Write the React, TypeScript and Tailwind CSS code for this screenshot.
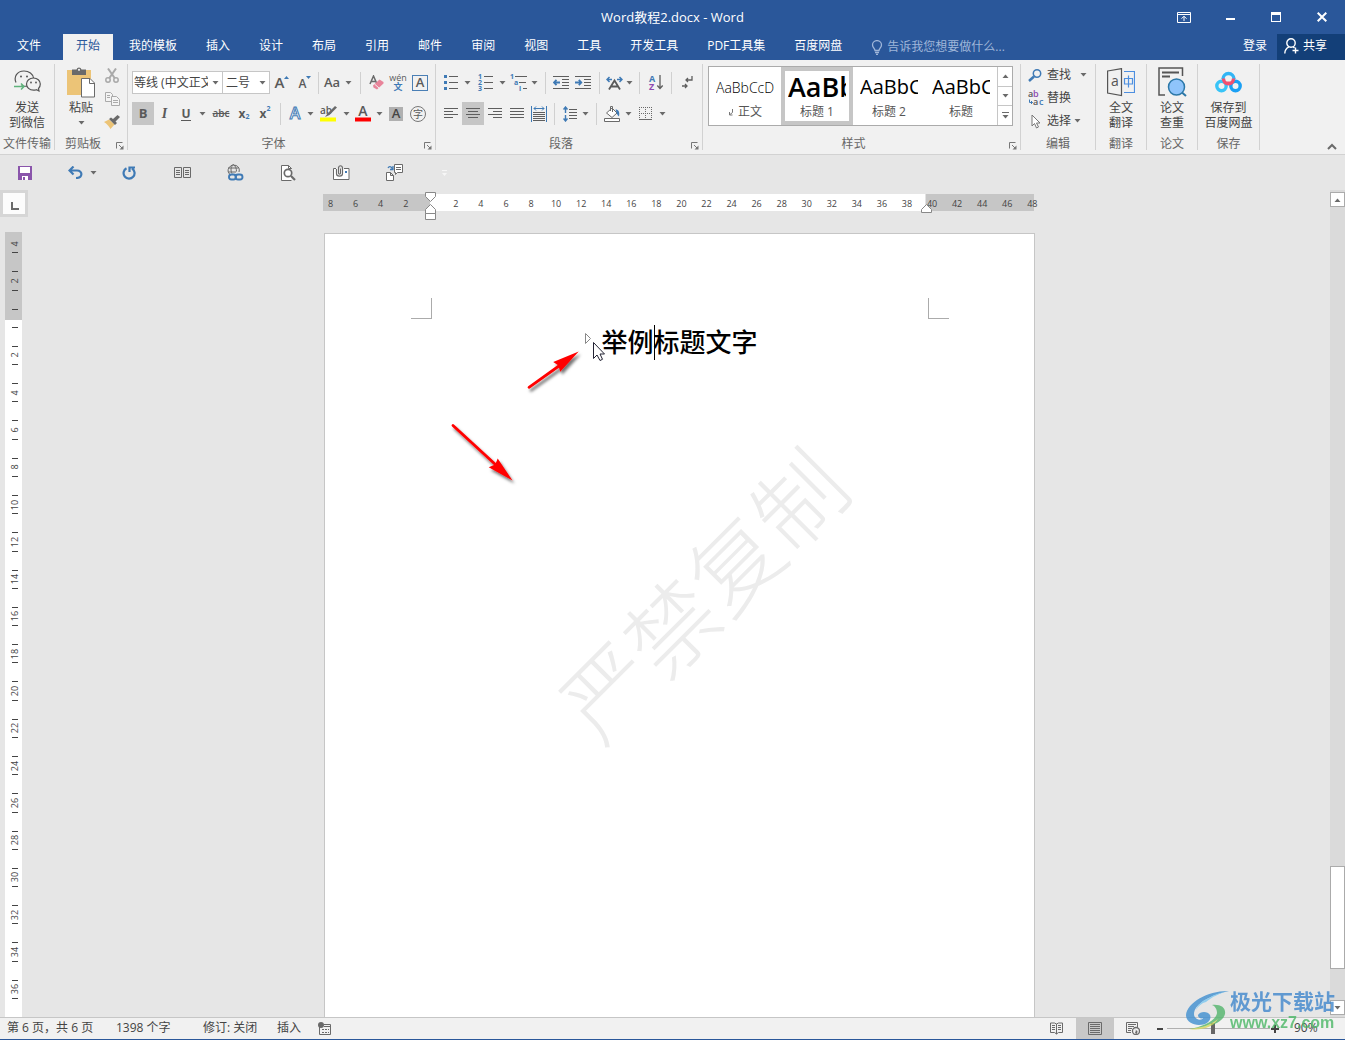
import React, { useState } from 'react';
import clsx from 'clsx';

const TABS = [
	'开始',
	'我的模板',
	'插入',
	'设计',
	'布局',
	'引用',
	'邮件',
	'审阅',
	'视图',
	'工具',
	'开发工具',
	'PDF工具集',
	'百度网盘',
];

const STYLES = [
	{ name: '正文', preview: 'AaBbCcDd', className: 'text-[14px] font-light', mark: true },
	{ name: '标题 1', preview: 'AaBb', className: 'text-[27px] font-semibold' },
	{ name: '标题 2', preview: 'AaBbCc', className: 'text-[20px]' },
	{ name: '标题', preview: 'AaBbCc', className: 'text-[20px]' },
];

const H_RULER = [8, 6, 4, 2, 0, ...Array.from({ length: 24 }, (_, i) => (i + 1) * 2)];
const V_RULER = [4, 2, 0, ...Array.from({ length: 18 }, (_, i) => (i + 1) * 2)];

const GRAY = '#6a6a6a';
const BLUE = '#3f7ab5';

interface ToolProps {
	label: string;
	className?: string;
	active?: boolean;
	children?: React.ReactNode;
}

function Tool({ label, className, active, children }: ToolProps) {
	return (
		<button
			type="button"
			aria-label={label}
			className={clsx(
				'flex h-[23px] shrink-0 items-center justify-center text-[#5a5a5a]',
				active && 'bg-[#c6c6c6]',
				className
			)}
		>
			{children}
		</button>
	);
}

function Caret() {
	return (
		<svg width="7" height="4" viewBox="0 0 7 4" className="shrink-0">
			<path d="M0.5 0h6L3.5 3.6z" fill={GRAY} />
		</svg>
	);
}

function DropArrow({ label }: { label: string }) {
	return (
		<Tool label={label} className="w-[11px]">
			<Caret />
		</Tool>
	);
}

function Sep({ className }: { className: string }) {
	return (
		<span className={clsx('flex h-[22px] shrink-0 justify-center', className)}>
			<span className="w-px bg-[#d0d0d0]" />
		</span>
	);
}

interface GroupProps {
	title: string;
	className: string;
	launcher?: boolean;
	children: React.ReactNode;
}

function Group({ title, className, launcher, children }: GroupProps) {
	return (
		<section
			aria-label={title}
			className={clsx('flex shrink-0 flex-col border-r border-[#d2d2d2]', className)}
		>
			<div className="flex-1">{children}</div>
			<div
				className={clsx(
					'relative h-[13px] text-center leading-[14px] whitespace-nowrap text-[#666]',
					launcher && 'pr-4'
				)}
			>
				{title}
				{launcher && (
					<button type="button" aria-label={`${title}设置`} className="absolute right-[3px] bottom-0">
						<svg width="8" height="8" viewBox="0 0 8 8" fill="none" stroke="#777">
							<path d="M0.5 6.5v-6h6M3 3l3 3" />
							<path d="M7.5 3.5v4h-4z" fill="#777" stroke="none" />
						</svg>
					</button>
				)}
			</div>
		</section>
	);
}

function BigButton({ lines, children }: { lines: string[]; children: React.ReactNode }) {
	return (
		<button type="button" className="flex w-full flex-col items-center pt-[3px] text-[#444]">
			<span className="mb-[3px] flex h-[30px] items-center">{children}</span>
			{lines.map((line) => (
				<span key={line} className="leading-[15px] whitespace-nowrap">
					{line}
				</span>
			))}
		</button>
	);
}

// Rows of horizontal strokes used by the alignment buttons
function Lines({ rows }: { rows: [number, number][] }) {
	return (
		<svg width="14" height="11" viewBox="0 0 14 11" stroke="#5e5e5e">
			{rows.map(([from, to], i) => (
				<path key={i} d={`M${from} ${i * 3 + 0.5}H${to}`} />
			))}
		</svg>
	);
}

function TitleBar() {
	return (
		<header className="grid h-[34px] grid-cols-[1fr_auto_1fr] items-center">
			<span />
			<h1 className="text-[13px] leading-[18px]">Word教程2.docx - Word</h1>
			<div className="flex justify-end">
				<button type="button" aria-label="功能区显示选项" className="flex w-[46px] justify-center">
					<svg width="14" height="11" viewBox="0 0 14 11" fill="none" stroke="#fff">
						<path d="M0.5 0.5h13v10h-13zM0.5 2.5h13M7 9V4.5M4.5 6.7L7 4.2l2.5 2.5" />
					</svg>
				</button>
				<button type="button" aria-label="最小化" className="flex w-[46px] items-center justify-center">
					<span className="mt-1 h-[2px] w-[9px] bg-white" />
				</button>
				<button type="button" aria-label="最大化" className="flex w-[46px] justify-center">
					<span className="h-[10px] w-[10px] border border-t-3 border-white" />
				</button>
				<button type="button" aria-label="关闭" className="flex w-[46px] items-center justify-center">
					<svg width="10" height="10" viewBox="0 0 10 10" stroke="#fff" strokeWidth="2">
						<path d="M0.7 0.7l8.6 8.6M9.3 0.7L0.7 9.3" />
					</svg>
				</button>
			</div>
		</header>
	);
}

function TabBar() {
	const [active, setActive] = useState('开始');

	return (
		<nav className="flex h-[26px] items-stretch gap-[3px] whitespace-nowrap">
			<button type="button" className="mr-[6px] ml-1 px-[13px] pb-[3px]">
				文件
			</button>
			{TABS.map((tab) => (
				<button
					key={tab}
					type="button"
					onClick={() => setActive(tab)}
					className={clsx('px-[13px] pb-[3px]', tab === active && 'bg-[#f1f1f1] text-[#2a579a]')}
				>
					{tab}
				</button>
			))}
			<label className="ml-[13px] flex flex-1 items-center gap-1">
				<svg width="12" height="15" viewBox="0 0 12 15" fill="none" stroke="#9fb6d9" strokeWidth="1.3">
					<path d="M4 10.5C4 8.5 1.5 7.500 1.500 4.900a4.500 4.300 0 0 1 9 0C10.500 7.500 8 8.500 8 10.500zM4 12.500h4M5 14.300h2" />
				</svg>
				<input
					aria-label="告诉我您想要做什么"
					placeholder="告诉我您想要做什么..."
					className="w-[160px] bg-transparent outline-none placeholder:text-[#9fb6d9]"
				/>
			</label>
			<button type="button" className="px-[7px] pb-[3px]">
				登录
			</button>
			<button type="button" className="flex w-[68px] items-center gap-1 bg-[#133f78] pb-[3px] pl-[7px]">
				<svg width="15" height="16" viewBox="0 0 15 16" fill="none" stroke="#fff" strokeWidth="1.4">
					<circle cx="7" cy="5" r="4.200" />
					<path d="M0.800 15.500c0-3 2-5.700 4.200-6.700M9 8.800l1.500 1M11.500 9.500v6M8.500 12.500h6" />
				</svg>
				共享
			</button>
		</nav>
	);
}

function ClipboardGroup() {
	return (
		<Group title="剪贴板" className="w-[73px]" launcher>
			<div className="flex">
				<button type="button" className="flex w-12 flex-col items-center pt-[3px] pl-1 text-[#444]">
					<svg width="28" height="31" viewBox="0 0 28 31" className="mb-[2px]">
						<path d="M0 3h24v25H0z" fill="#ecc477" />
						<path d="M5 2.500h4.500a2.600 2.600 0 0 1 5 0H19V8H5z" fill="#6a6a6a" />
						<circle cx="12" cy="2.800" r="1.100" fill="#f1f1f1" />
						<path d="M14.500 11.500h8.500l4.500 4.500v14h-13z" fill="#fff" stroke="#6a6a6a" />
						<path d="M22.500 11.500v5h5" fill="none" stroke="#6a6a6a" />
					</svg>
					<span className="mb-[6px] leading-[15px]">粘贴</span>
					<Caret />
				</button>
				<div className="flex flex-col">
					<Tool label="剪切" className="w-[18px]">
						<svg width="14" height="15" viewBox="0 0 14 15" fill="none" stroke="#a9a9a9" strokeWidth="1.500">
							<circle cx="3" cy="12" r="2.200" />
							<circle cx="11" cy="12" r="2.200" />
							<path d="M3 0.500l6.800 9.800M11 0.500L4.200 10.300" strokeWidth="2" />
						</svg>
					</Tool>
					<Tool label="复制" className="w-[18px]">
						<svg width="15" height="14" viewBox="0 0 15 14" fill="#f4f4f4" stroke="#aaa">
							<path d="M0.500 0.500h5l2 2v7h-7z" />
							<path d="M6.500 4.500h5l3 3v6h-8zM8 8.500h5M8 10.500h5M2 3.500h3M2 5.500h3" />
						</svg>
					</Tool>
					<Tool label="格式刷" className="w-[18px]">
						<svg width="16" height="14" viewBox="0 0 16 14">
							<path d="M0 7l5-2.500 5.500 5L6.500 14C5 11 3 9 0 7z" fill="#ecc477" />
							<path d="M5 4l2-1.500L9 4l4.500-4L16 2 11.500 6.500 13 8l-2 2z" fill="#6a6a6a" />
						</svg>
					</Tool>
				</div>
			</div>
		</Group>
	);
}

function FontGroup() {
	return (
		<Group title="字体" className="w-[308px]" launcher>
			<div className="flex flex-col gap-2 pt-[7px] pl-1">
				<div className="flex items-center">
					<div className="relative w-[91px]">
						<select
							aria-label="字体"
							className="h-[23px] w-full appearance-none overflow-hidden border border-[#c6c6c6] bg-white pr-[14px] pl-px text-[#444] outline-none"
						>
							<option>等线 (中文正文)</option>
						</select>
						<span className="pointer-events-none absolute top-[10px] right-1">
							<Caret />
						</span>
					</div>
					<div className="relative -ml-px w-12">
						<select
							aria-label="字号"
							className="h-[23px] w-full appearance-none border border-[#c6c6c6] bg-white pl-[3px] text-[#444] outline-none"
						>
							<option>二号</option>
						</select>
						<span className="pointer-events-none absolute top-[10px] right-1">
							<Caret />
						</span>
					</div>
					<Tool label="增大字号" className="w-6">
						<span className="text-[15px] font-semibold">A</span>
						<svg width="5" height="3" viewBox="0 0 5 3" className="mb-[11px]">
							<path d="M0 3h5L2.500 0z" fill={BLUE} />
						</svg>
					</Tool>
					<Tool label="减小字号" className="w-[22px]">
						<span className="mt-[2px] text-[12px] font-semibold">A</span>
						<svg width="5" height="3" viewBox="0 0 5 3" className="mb-[11px]">
							<path d="M0 0h5L2.500 3z" fill={BLUE} />
						</svg>
					</Tool>
					<Sep className="w-[5px]" />
					<Tool label="更改大小写" className="w-[22px]">
						<span className="text-[13px] font-semibold">Aa</span>
					</Tool>
					<DropArrow label="更改大小写选项" />
					<Sep className="w-[13px]" />
					<Tool label="清除所有格式" className="w-5">
						<svg width="16" height="16" viewBox="0 0 16 16">
							<path d="M1 9L4.500 1 8 9M2.300 6.500h4.400" fill="none" stroke={GRAY} strokeWidth="1.500" />
							<path d="M4 10.500L10.500 4.500l4 2.500v1.500L8 14.500 4.500 12.500z" fill="#e8849a" />
							<path d="M5.500 9l4.500 4" stroke="#f1f1f1" />
						</svg>
					</Tool>
					<Tool label="拼音指南" className="w-[22px] flex-col">
						<span className="text-[9px] leading-[8px]">wén</span>
						<span className="text-[9px] leading-[10px] font-bold text-[#3f7ab5]">文</span>
					</Tool>
					<Tool label="字符边框" className="w-[22px]">
						<span className="flex size-4 items-center justify-center border border-[#4a7fb5] text-[13px] leading-none font-semibold">
							A
						</span>
					</Tool>
				</div>
				<div className="flex items-center">
					<Tool label="加粗" className="w-[22px]" active>
						<span className="text-[13px] font-bold">B</span>
					</Tool>
					<Tool label="倾斜" className="w-[21px]">
						<span className="font-['Liberation_Serif'] text-[14px] font-bold italic">I</span>
					</Tool>
					<Tool label="下划线" className="w-[22px]">
						<span className="border-b border-[#5a5a5a] text-[12px] leading-[13px] font-bold">U</span>
					</Tool>
					<DropArrow label="下划线选项" />
					<Tool label="删除线" className="w-[26px]">
						<span className="text-[10px] font-semibold line-through">abc</span>
					</Tool>
					<Tool label="下标" className="w-5">
						<span className="text-[12px] font-bold">x</span>
						<span className="mt-2 text-[7px] font-bold text-[#3f7ab5]">2</span>
					</Tool>
					<Tool label="上标" className="w-[22px]">
						<span className="text-[12px] font-bold">x</span>
						<span className="mb-2 text-[7px] font-bold text-[#3f7ab5]">2</span>
					</Tool>
					<Sep className="w-[9px]" />
					<Tool label="文本效果" className="w-5">
						<svg width="16" height="17" viewBox="0 0 16 17" className="overflow-visible">
							<text
								x="8"
								y="14"
								textAnchor="middle"
								fontSize="16"
								fontWeight="600"
								fill="#fff"
								stroke={BLUE}
								strokeWidth="1"
							>
								A
							</text>
						</svg>
					</Tool>
					<DropArrow label="文本效果选项" />
					<Tool label="突出显示" className="w-[25px]">
						<svg width="17" height="17" viewBox="0 0 17 17" className="overflow-visible">
							<text x="0" y="9" fontSize="10" fontWeight="600" fill="#5a5a5a">
								ab
							</text>
							<path d="M5 12l2.500-3.500L15 1l2 1.500-7.500 7.500z" fill={GRAY} />
							<path d="M0 12.500h16v4H0z" fill="#ff0" />
						</svg>
					</Tool>
					<DropArrow label="突出显示颜色" />
					<Tool label="字体颜色" className="w-[22px]">
						<svg width="16" height="17" viewBox="0 0 16 17" className="overflow-visible">
							<text x="8" y="11" textAnchor="middle" fontSize="14" fontWeight="600" fill="#5a5a5a">
								A
							</text>
							<path d="M0 12.500h16v4H0z" fill="#f00" />
						</svg>
					</Tool>
					<DropArrow label="字体颜色选项" />
					<Tool label="字符底纹" className="w-[22px]">
						<span className="flex size-[14px] items-center justify-center bg-[#b0b0b0] text-[13px] leading-none font-semibold text-[#444]">
							A
						</span>
					</Tool>
					<Tool label="带圈字符" className="w-[22px]">
						<span className="flex size-4 items-center justify-center rounded-full border border-[#777] text-[10px] leading-none">
							字
						</span>
					</Tool>
				</div>
			</div>
		</Group>
	);
}

function ParagraphGroup() {
	return (
		<Group title="段落" className="w-[267px]" launcher>
			<div className="flex flex-col gap-2 pt-[7px] pl-1">
				<div className="flex items-center">
					<Tool label="项目符号" className="w-[22px]">
						<svg width="14" height="15" viewBox="0 0 14 15" stroke="#5e5e5e">
							<path d="M5 1.500h9M5 7.500h9M5 13.500h9" />
							<path d="M0 0h3v3H0zM0 6h3v3H0zM0 12h3v3H0z" fill={BLUE} stroke="none" />
						</svg>
					</Tool>
					<DropArrow label="项目符号库" />
					<Tool label="编号" className="w-6">
						<svg width="15" height="17" viewBox="0 0 15 17" stroke="#5e5e5e" className="overflow-visible">
							<path d="M6 2.500h9M6 8.500h9M6 14.500h9" />
							<g fill={BLUE} stroke="none" fontSize="7" fontWeight="700">
								<text x="0" y="5">1</text>
								<text x="0" y="11">2</text>
								<text x="0" y="17">3</text>
							</g>
						</svg>
					</Tool>
					<DropArrow label="编号库" />
					<Tool label="多级列表" className="w-[21px]">
						<svg width="17" height="17" viewBox="0 0 17 17" stroke="#5e5e5e" className="overflow-visible">
							<path d="M5 2.500h12M9 8.500h7M13 14.500h4" />
							<g fill={BLUE} stroke="none" fontSize="7" fontWeight="700">
								<text x="0" y="5">1</text>
								<text x="4" y="11">a</text>
								<text x="9" y="17">i</text>
							</g>
						</svg>
					</Tool>
					<DropArrow label="列表库" />
					<Sep className="w-[10px]" />
					<Tool label="减少缩进量" className="w-[22px]">
						<svg width="16" height="13" viewBox="0 0 16 13" stroke="#5e5e5e">
							<path d="M0 0.500h16M9 3.500h7M9 6.500h7M9 9.500h7M0 12.500h16" />
							<path d="M7 6.500H1M3.500 3.800L1 6.500l2.500 2.700" stroke={BLUE} strokeWidth="1.800" fill="none" />
						</svg>
					</Tool>
					<Tool label="增加缩进量" className="w-[22px]">
						<svg width="16" height="13" viewBox="0 0 16 13" stroke="#5e5e5e">
							<path d="M0 0.500h16M9 3.500h7M9 6.500h7M9 9.500h7M0 12.500h16" />
							<path d="M0 6.500h6M3.800 3.800l2.500 2.700-2.500 2.700" stroke={BLUE} strokeWidth="1.800" fill="none" />
						</svg>
					</Tool>
					<Sep className="w-[10px]" />
					<Tool label="中文版式" className="w-5">
						<svg width="17" height="14" viewBox="0 0 17 14" fill="none">
							<path d="M3 13.500L8.500 4.500 14 13.500M5 10.500h7" stroke="#5a5a5a" strokeWidth="1.800" />
							<path
								d="M1 3.500h5M3.500 1L1 3.500 3.500 6M16 3.500h-5M13.500 1L16 3.500 13.500 6"
								stroke={BLUE}
								strokeWidth="1.500"
							/>
						</svg>
					</Tool>
					<DropArrow label="中文版式选项" />
					<Sep className="w-[9px]" />
					<Tool label="排序" className="w-6">
						<svg width="14" height="17" viewBox="0 0 14 17" fontSize="9" fontWeight="700" className="overflow-visible">
							<text x="0" y="8" fill={BLUE}>A</text>
							<text x="0" y="16" fill="#8e4bb0">Z</text>
							<path d="M11 1v13.500M8.300 11.500L11 14.500l2.700-3" stroke="#5e5e5e" strokeWidth="1.300" fill="none" />
						</svg>
					</Tool>
					<Sep className="w-[7px]" />
					<Tool label="显示编辑标记" className="w-6">
						<svg width="11" height="13" viewBox="0 0 11 13" fill="none" stroke="#5e5e5e" strokeWidth="1.300">
							<path d="M10 0v4H4M6 2L4 4l2 2M0 10h5M3 8l2 2-2 2" />
						</svg>
					</Tool>
				</div>
				<div className="flex items-center">
					<Tool label="左对齐" className="w-[22px]">
						<Lines rows={[[0, 14], [0, 9], [0, 14], [0, 9]]} />
					</Tool>
					<Tool label="居中" className="w-[22px]" active>
						<Lines rows={[[0, 14], [2, 12], [0, 14], [2, 12]]} />
					</Tool>
					<Tool label="右对齐" className="w-[22px]">
						<Lines rows={[[0, 14], [5, 14], [0, 14], [5, 14]]} />
					</Tool>
					<Tool label="两端对齐" className="w-[22px]">
						<Lines rows={[[0, 14], [0, 14], [0, 14], [0, 14]]} />
					</Tool>
					<Tool label="分散对齐" className="w-[22px]">
						<svg width="16" height="16" viewBox="0 0 16 16" stroke="#5e5e5e" fill="none">
							<path d="M2 6.500h12M2 8.500h12M2 10.500h12M2 12.500h12M2 14.500h12" />
							<path d="M0.500 0v16M15.500 0v16M3 2.500h10M5 0.500l-2 2 2 2M11 0.500l2 2-2 2" stroke={BLUE} />
						</svg>
					</Tool>
					<Sep className="w-[9px]" />
					<Tool label="行和段落间距" className="w-[21px]">
						<svg width="14" height="16" viewBox="0 0 14 16" fill="none" stroke="#5e5e5e">
							<path d="M6 3.500h8M6 6.500h8M6 9.500h8M6 12.500h8" />
							<path d="M2.500 7V1M0.500 3.500l2-2.500 2 2.500M2.500 9v6M0.500 12.500l2 2.500 2-2.500" stroke={BLUE} strokeWidth="1.400" />
						</svg>
					</Tool>
					<DropArrow label="间距选项" />
					<Sep className="w-[10px]" />
					<Tool label="底纹" className="w-[22px]">
						<svg width="17" height="16" viewBox="0 0 17 16" fill="none" stroke={GRAY}>
							<path d="M2.500 7L8 2l5 5-5 4.500zM6.500 5V0.500h2V6" fill="#fff" />
							<path d="M11.500 3.500c3 0 4.500 2.500 3.500 7-1-1-2-2-2.500-4z" fill={BLUE} stroke="none" />
							<path d="M0.500 12.500h15v3h-15z" fill="#fff" />
						</svg>
					</Tool>
					<DropArrow label="底纹颜色" />
					<Tool label="边框" className="w-[23px]">
						<svg width="13" height="13" viewBox="0 0 13 13" fill="none" stroke={GRAY}>
							<path d="M0.500 0v12M6.500 0v12M12.500 0v12M0 0.500h13M0 6.500h13" strokeDasharray="1 1" />
							<path d="M0 12.500h13" />
						</svg>
					</Tool>
					<DropArrow label="边框选项" />
				</div>
			</div>
		</Group>
	);
}

function StylesGroup() {
	const [selected, setSelected] = useState('标题 1');

	return (
		<Group title="样式" className="w-[318px]" launcher>
			<div className="mt-[2px] mr-[7px] ml-[5px] flex h-[60px] border border-[#ababab] bg-white">
				{STYLES.map((style) => (
					<button
						key={style.name}
						type="button"
						onClick={() => setSelected(style.name)}
						className={clsx(
							'flex w-[72px] flex-col items-center border-4',
							style.name === selected ? 'border-[#c6c6c6]' : 'border-transparent'
						)}
					>
						<span
							className={clsx(
								'flex h-8 w-[58px] items-center overflow-hidden whitespace-nowrap text-black',
								style.className
							)}
						>
							{style.preview}
						</span>
						<span className="flex items-center gap-1 leading-[18px] text-[#555]">
							{style.mark && (
								<svg width="6" height="7" viewBox="0 0 6 7" fill="none" stroke="#777">
									<path d="M4.500 0v3.500L2 5.500M1.500 3v3h3" />
								</svg>
							)}
							{style.name}
						</span>
					</button>
				))}
				<div className="flex flex-1 flex-col divide-y divide-[#c6c6c6] border-l border-[#c6c6c6]">
					<button type="button" aria-label="上一行" className="flex flex-1 items-center justify-center">
						<span className="rotate-180">
							<Caret />
						</span>
					</button>
					<button type="button" aria-label="下一行" className="flex flex-1 items-center justify-center">
						<Caret />
					</button>
					<button type="button" aria-label="其他样式" className="flex flex-1 flex-col items-center justify-center gap-[2px]">
						<span className="h-px w-[7px] bg-[#6a6a6a]" />
						<Caret />
					</button>
				</div>
			</div>
		</Group>
	);
}

function EditGroup() {
	return (
		<Group title="编辑" className="w-[75px]">
			<div className="flex flex-col pl-[7px] text-[#444]">
				<button type="button" className="flex h-[22px] items-center">
					<span className="w-[19px]">
						<svg width="14" height="13" viewBox="0 0 14 13" fill="none" stroke={BLUE}>
							<circle cx="9" cy="4.500" r="3.700" strokeWidth="1.500" />
							<path d="M6 7.500L1 12" strokeWidth="2.500" />
						</svg>
					</span>
					<span className="mr-[9px]">查找</span>
					<Caret />
				</button>
				<button type="button" className="flex h-6 items-center">
					<svg width="19" height="17" viewBox="0 0 19 17" fontSize="9" fontWeight="600" className="overflow-visible">
						<text x="0" y="7" fill="#555">a</text>
						<text x="5" y="7" fill="#8e4bb0">b</text>
						<text x="5" y="15" fill="#555">a</text>
						<text x="11" y="15" fill={BLUE}>c</text>
						<path d="M1.500 9.500v3h3M3 11l1.500 1.500L3 14" stroke={BLUE} fill="none" />
					</svg>
					替换
				</button>
				<button type="button" className="flex h-[22px] items-center">
					<span className="w-[19px] pl-[3px]">
						<svg width="10" height="15" viewBox="0 0 10 15" fill="#fff" stroke="#777">
							<path d="M1 1v11l2.500-2.500 2 4.500 2-1-2-4h3.500z" />
						</svg>
					</span>
					<span className="mr-[3px]">选择</span>
					<Caret />
				</button>
			</div>
		</Group>
	);
}

function Ribbon() {
	return (
		<div className="flex h-[95px] border-b border-[#d2d2d2] bg-[#f1f1f1] pt-1 pb-1">
			<Group title="文件传输" className="w-[55px]">
				<BigButton lines={['发送', '到微信']}>
					<svg width="27" height="24" viewBox="0 0 27 24" fill="none" stroke="#555" strokeWidth="1.200">
						<path d="M2 12.500C-0.500 7 3 1 10 1c5 0 9 3 9.500 7M13 16c-2 0.500-4 0.500-6 0" />
						<path d="M19.500 8c-4 0-7 2.500-7 6s3 6.200 7 6.200c1 0 2-0.200 3-0.500l2.500 1.300-0.500-2.500c1-1 1.800-2.500 1.800-4.500 0-3.500-3-6-6.800-6z" />
						<g fill="#555" stroke="none">
							<circle cx="7" cy="6.500" r="1" />
							<circle cx="13" cy="6.500" r="1" />
							<circle cx="17" cy="12.500" r="0.900" />
							<circle cx="22" cy="12.500" r="0.900" />
						</g>
						<path d="M0 16.500h10M7 13.500l3 3-3 3" stroke="#5fb37c" strokeWidth="1.500" />
					</svg>
				</BigButton>
			</Group>
			<ClipboardGroup />
			<FontGroup />
			<ParagraphGroup />
			<StylesGroup />
			<EditGroup />
			<Group title="翻译" className="w-[51px]">
				<BigButton lines={['全文', '翻译']}>
					<svg width="28" height="29" viewBox="0 0 28 29" fill="none">
						<path d="M0.600 3L14.500 0.600v27L0.600 25z" stroke="#555" strokeWidth="1.200" />
						<text x="4" y="18" fontSize="14" fill="#555">a</text>
						<path d="M17 3.500h10.500v21H17" stroke="#4d8fe0" strokeWidth="1.200" />
						<path d="M17.500 10.500h8v5.500h-8zM21.500 7.500v12" stroke="#4d8fe0" strokeWidth="1.200" />
					</svg>
				</BigButton>
			</Group>
			<Group title="论文" className="w-[51px]">
				<BigButton lines={['论文', '查重']}>
					<svg width="29" height="30" viewBox="0 0 29 30" fill="none">
						<path d="M24.500 9V1H1v27h6" stroke="#555" strokeWidth="1.500" />
						<path d="M4 5.500h17M4 9.500h8" stroke="#555" strokeWidth="2" />
						<circle cx="18.500" cy="20" r="8" fill="#8fc4fb" stroke="#2c78a8" strokeWidth="1.500" />
						<path d="M24 25.500l4 3.500" stroke="#2c78a8" strokeWidth="2" />
					</svg>
				</BigButton>
			</Group>
			<Group title="保存" className="w-[62px]">
				<BigButton lines={['保存到', '百度网盘']}>
					<svg width="27" height="22" viewBox="0 0 27 22" fill="none" strokeWidth="3.400">
						<path d="M8 8a5.500 5.500 0 0 1 11 0" stroke="#31b5f5" />
						<circle cx="6.500" cy="15" r="4.700" stroke="#38c4f7" />
						<circle cx="20.500" cy="15" r="4.700" stroke="#1ba0f4" />
						<path d="M8.500 7.500c0 3 2 5.300 5 5.300s5-2.300 5-5.300" stroke="#f2506f" />
						<path d="M10 12l3.500-0.500 3.500 0.500" stroke="#f2506f" strokeWidth="2" />
					</svg>
				</BigButton>
			</Group>
			<div className="flex flex-1 items-end justify-end pr-2">
				<button type="button" aria-label="折叠功能区">
					<svg width="10" height="7" viewBox="0 0 10 7" fill="none" stroke={GRAY} strokeWidth="2">
						<path d="M1 6l4-4 4 4" />
					</svg>
				</button>
			</div>
		</div>
	);
}

function QuickAccess() {
	return (
		<div className="flex h-[35px] shrink-0 items-center">
			<Tool label="保存" className="w-[50px]">
				<svg width="14" height="14" viewBox="0 0 14 14">
					<path d="M0 0h14v14H0z" fill="#8a55ab" />
					<path d="M2 1h10v6H2zM4 10h6v4H4z" fill="#fff" />
					<path d="M5 11h2v3H5z" fill="#8a55ab" />
				</svg>
			</Tool>
			<Tool label="撤消" className="ml-[10px] w-[30px]">
				<svg width="15" height="13" viewBox="0 0 15 13" fill="none" stroke={BLUE} strokeWidth="2.200">
					<path d="M1.500 4.500H9c6 0 6 7.500-1 7.500M5.500 0.500l-4 4 4 4" />
				</svg>
			</Tool>
			<Tool label="撤消列表" className="w-[7px]">
				<Caret />
			</Tool>
			<Tool label="重复" className="w-[63px]">
				<svg width="14" height="14" viewBox="0 0 14 14" fill="none" stroke={BLUE} strokeWidth="2.200">
					<path d="M4.500 2.300a5.500 5.500 0 1 0 5.500 0.200M7.500 6V1.500H13" />
				</svg>
			</Tool>
			<Tool label="双页" className="w-[44px]">
				<svg width="17" height="11" viewBox="0 0 17 11" fill="none" stroke={GRAY}>
					<path d="M0.500 0.500h7v10h-7zM9.500 0.500h7v10h-7zM2 3.500h4M2 5.500h4M2 7.500h4M11 3.500h4M11 5.500h4M11 7.500h4" />
				</svg>
			</Tool>
			<Tool label="超链接" className="w-[62px]">
				<svg width="17" height="17" viewBox="0 0 17 17" fill="none" stroke={GRAY}>
					<path d="M12 8A5.500 5.500 0 1 0 3 10.500M1 4h10.500M1 8h8M6.500 0.500c-3 2.500-3 6-1.500 9M6.500 0.500c2 1.500 3 4 3 7" />
					<g stroke={BLUE} strokeWidth="1.900">
						<rect x="2" y="10.500" width="7" height="5" rx="2.500" />
						<rect x="8.500" y="10.500" width="7" height="5" rx="2.500" />
					</g>
				</svg>
			</Tool>
			<Tool label="打印预览" className="w-[44px]">
				<svg width="15" height="16" viewBox="0 0 15 16" fill="none" stroke={GRAY}>
					<path d="M10.500 4V3.500l-3-3h-7v15h10M7.500 0.500v3h3" fill="#fff" />
					<circle cx="7" cy="8" r="3.700" strokeWidth="1.700" fill="#fff" />
					<path d="M10 11l4 4" strokeWidth="2.200" />
				</svg>
			</Tool>
			<Tool label="电子邮件" className="w-[62px]">
				<svg width="17" height="16" viewBox="0 0 17 16" fill="none" stroke={GRAY}>
					<path d="M3 3.500H0.500v11h15.500v-11h-5" fill="#fff" />
					<path d="M3.500 4v4.500c0 3.500 6 3.500 6 0V3c0-3-4-3-4 0v5c0 1.500 2 1.500 2 0V3.500" strokeWidth="1.200" />
					<path d="M12 6h2v2h-2z" fill={BLUE} stroke="none" />
				</svg>
			</Tool>
			<Tool label="插入批注" className="w-[44px]">
				<svg width="17" height="17" viewBox="0 0 17 17" fill="none" stroke={GRAY}>
					<path d="M8.500 0.500h8v8h-5l-2 2v-2h-1zM10 3.500h5M10 5.500h5" fill="#fff" />
					<path d="M0.500 8.500h4l3 3v5h-7zM4.500 8.500v3h3" fill="#fff" />
					<path d="M2 4c1-2 3-2 4.500 1M7 2v3.500H4" stroke={BLUE} strokeWidth="1.300" />
				</svg>
			</Tool>
			<Tool label="自定义快速访问工具栏" className="w-14">
				<svg width="5" height="6" viewBox="0 0 5 6" fill="#f7f7f7">
					<path d="M0 0h5v1H0zM0 3h5L2.500 6z" />
				</svg>
			</Tool>
		</div>
	);
}

function VerticalRuler() {
	return (
		<div className="flex w-[29px] shrink-0 flex-col">
			<div className="mb-[15px] h-[27px] w-7 border-3 border-[#d6d6d6] bg-[#fcfcfc]">
				<span className="mt-[9px] ml-2 block h-2 w-2 border-b-2 border-l-2 border-[#6a6a6a]" />
			</div>
			<div className="ml-[5px] min-h-0 w-[17px] flex-1 overflow-hidden bg-[linear-gradient(#c6c6c6_88px,#fff_88px)]">
				<div className="-mt-[7px] flex h-[783px] flex-col">
					{V_RULER.map((n, i) => (
						<div key={i} className="flex flex-1 flex-col items-center justify-between py-[9px] pl-[3px]">
							<span className={clsx('h-px w-[6px] bg-[#444]', i === 0 && 'invisible')} />
							<span className="flex h-3 -rotate-90 items-center text-[9px] text-[#444]">
								{n || ''}
							</span>
							<span className="h-px w-[6px] bg-[#444]" />
						</div>
					))}
				</div>
			</div>
		</div>
	);
}

function HorizontalRuler() {
	return (
		<div className="relative mx-auto mt-1 h-[17px] w-[731px] shrink-0 bg-[linear-gradient(90deg,transparent_9px,#c6c6c6_9px,#c6c6c6_116px,#fff_116px,#fff_611px,#c6c6c6_612px,#c6c6c6_720px,transparent_720px)] text-[9px] leading-[19px] text-[#444]">
			<div className="flex pl-1">
				{H_RULER.map((n, i) => (
					<span key={i} className="flex-1 text-center">
						{n || '\u00a0'}
					</span>
				))}
			</div>
			<svg
				width="12"
				height="28"
				viewBox="0 0 12 28"
				fill="#fff"
				stroke="#888"
				className="absolute -top-[2px] left-[111px]"
			>
				<path d="M0.500 0.500h10v4l-5 5-5-5zM5.500 12.500l5 5v4h-10v-4zM0.500 21.500h10v6h-10z" />
			</svg>
			<svg
				width="12"
				height="11"
				viewBox="0 0 12 11"
				fill="#fff"
				stroke="#888"
				className="absolute top-[9px] left-[607px]"
			>
				<path d="M5.500 1.500l5 5v3h-10v-3z" />
			</svg>
		</div>
	);
}

function Page() {
	return (
		<main className="relative mx-auto mt-[22px] w-[711px] flex-1 overflow-hidden border border-b-0 border-[#c6c6c6] bg-white">
			<div className="flex justify-between pt-16 pr-[85px] pl-[86px]">
				<span className="size-[21px] border-r border-b border-[#ababab]" />
				<span className="size-[21px] border-b border-l border-[#ababab]" />
			</div>
			<h2 className="mt-[5px] text-center text-[26px] leading-9 font-medium text-black">举例标题文字</h2>

			<span className="absolute top-[361px] left-[378px] -translate-x-1/2 -translate-y-1/2 -rotate-45 text-[90px] leading-none font-light whitespace-nowrap text-[#ececec] select-none">
				严禁复制
			</span>

			{/* Caret, collapse handle, mouse pointer and the two marker arrows */}
			<svg width="710" height="300" viewBox="325 234 710 300" className="absolute top-0 left-0">
				<defs>
					<filter id="shadow" x="-20%" y="-20%" width="150%" height="150%">
						<feDropShadow dx="2" dy="3" stdDeviation="1.5" floodColor="#000" floodOpacity="0.55" />
					</filter>
				</defs>
				<path d="M654.500 325v35" stroke="#000" />
				<path d="M585.500 333.500v10l5-5z" fill="#fff" stroke="#888" />
				<path
					d="M593.500 342.500v16l3.500-3.500 3 5.500 2.500-1.200-2.500-5.300h4.500z"
					fill="#fff"
					stroke="#223"
				/>
				<g filter="url(#shadow)" fill="#f00" stroke="#f00">
					<path d="M529 387.300L561 364.500" strokeWidth="2.800" strokeLinecap="round" />
					<path d="M578.700 351.500L553.200 362l5.300 3.500 1.700 6.200z" stroke="none" />
					<path d="M453 425.500L496 465" strokeWidth="2.800" strokeLinecap="round" />
					<path d="M512.500 480.500L497.700 458.500l-2.500 6-6.500 2.800z" stroke="none" />
				</g>
			</svg>
		</main>
	);
}

function ScrollBar() {
	return (
		<div className="flex w-[15px] shrink-0 flex-col bg-[#dadada] pt-[2px] pb-[2px]">
			<button
				type="button"
				aria-label="向上滚动"
				className="flex h-[15px] items-center justify-center border border-[#ababab] bg-white"
			>
				<span className="rotate-180">
					<Caret />
				</span>
			</button>
			<div className="flex flex-1 flex-col justify-end pb-[31px]">
				<div className="h-[103px] border border-[#ababab] bg-white" />
			</div>
			<button
				type="button"
				aria-label="向下滚动"
				className="flex h-[15px] items-center justify-center border border-[#ababab] bg-white"
			>
				<Caret />
			</button>
		</div>
	);
}

function StatusBar() {
	const [zoom, setZoom] = useState(90);

	return (
		<footer className="flex h-[23px] shrink-0 items-center border-t border-b border-t-[#c6c6c6] border-b-[#2a579a] bg-[#f1f1f1] pl-[7px] leading-[18px] whitespace-nowrap text-[#444]">
			<div className="flex pb-[2px]">
				<span className="w-[109px]">第 6 页，共 6 页</span>
				<span className="w-[87px]">1398 个字</span>
				<span className="w-[74px]">修订: 关闭</span>
				<span className="w-[41px]">插入</span>
			</div>
			<button type="button" aria-label="录制宏">
				<svg width="13" height="13" viewBox="0 0 13 13" fill="none" stroke={GRAY}>
					<path d="M1.500 4v8.500h11v-10H6M6 4.500h6" />
					<path d="M4 7.500h7M4 10.500h7" strokeDasharray="2 1" />
					<circle cx="3" cy="3" r="3" fill={GRAY} stroke="none" />
				</svg>
			</button>
			<div className="ml-auto flex h-full items-center">
				<button type="button" aria-label="阅读视图" className="mr-[13px]">
					<svg width="13" height="13" viewBox="0 0 13 13" fill="none" stroke={GRAY}>
						<path d="M0.500 1v9.500h4l2 1.500 2-1.500h4V1h-4l-2 1-2-1zM6.500 2v10M2 3.500h3M2 5.500h3M2 7.500h3M8 3.500h3M8 5.500h3M8 7.500h3" />
					</svg>
				</button>
				<button
					type="button"
					aria-label="页面视图"
					className="flex h-full w-[38px] items-center justify-center bg-[#c8c8c8]"
				>
					<svg width="14" height="13" viewBox="0 0 14 13" fill="none" stroke={GRAY}>
						<path d="M0.500 0.500h13v12h-13zM2 2.500h10M2 4.500h10M2 6.500h10M2 8.500h10M2 10.500h10" />
					</svg>
				</button>
				<button type="button" aria-label="Web 版式视图" className="mr-[17px] ml-3">
					<svg width="14" height="13" viewBox="0 0 14 13" fill="none" stroke={GRAY}>
						<path d="M11.500 5V0.500H0.500v10H5M2 2.500h8M2 4.500h6M2 6.500h4M2 8.500h3" />
						<circle cx="10" cy="9" r="3.500" strokeWidth="1.300" />
						<path d="M8 7l2 1.500L9 11l2 1 0.500-3z" fill={GRAY} stroke="none" />
					</svg>
				</button>
				<button type="button" aria-label="缩小" className="mr-1 h-[2px] w-[6px] bg-[#444]" />
				<input
					type="range"
					aria-label="缩放"
					min={10}
					max={190}
					value={zoom}
					onChange={(e) => setZoom(Number(e.target.value))}
					className="h-[11px] w-[103px] appearance-none bg-[linear-gradient(#b0b0b0,#b0b0b0)] bg-[length:100%_1px] bg-center bg-no-repeat [&::-webkit-slider-thumb]:h-[11px] [&::-webkit-slider-thumb]:w-1 [&::-webkit-slider-thumb]:appearance-none [&::-webkit-slider-thumb]:bg-[#666]"
				/>
				<button type="button" aria-label="放大" className="mr-[15px] ml-[1px]">
					<svg width="8" height="8" viewBox="0 0 8 8" stroke="#444" strokeWidth="2">
						<path d="M4 0v8M0 4h8" />
					</svg>
				</button>
				<span className="w-[51px] pb-[2px]">{zoom}%</span>
			</div>
		</footer>
	);
}

function SiteBadge() {
	return (
		<div className="pointer-events-none absolute right-[10px] bottom-[7px] flex items-center opacity-80">
			<svg width="45" height="42" viewBox="0 0 45 42" fill="none">
				<path
					d="M44 1C25 0 2 12 1 25c0 6 6 10 13 10 8 0 13-5 11-10-2-4-10-4-12 0 0 3 3 4 5 3-1 3-9 2-9-4C9 14 26 5 44 1z"
					fill="#3f8fd0"
				/>
				<path d="M24 8C30 4 37 2 44 1 35 3 27 7 21 12c-4 1-8 4-10 8 1-5 7-10 13-12z" fill="#7cc8f0" />
				<path d="M27 15c9-1 14 3 13 9C38 33 22 39 4 39c13-2 27-8 28-16 0-4-2-7-5-8z" fill="#53b56c" />
				<path d="M4 39c12-1 22-4 29-10-5 8-16 12-29 10z" fill="#d8d860" />
			</svg>
			<div className="flex flex-col">
				<span className="text-[21px] leading-6 font-bold text-[#3f86cc]">极光下载站</span>
				<span className="font-['Liberation_Sans'] text-[16px] leading-5 font-bold text-[#4bb766]">
					www.xz7.com
				</span>
			</div>
		</div>
	);
}

export default function App() {
	return (
		<div className="relative flex h-screen flex-col overflow-hidden bg-[#e6e6e6] font-['Open_Sans','Noto_Sans_CJK_SC',sans-serif] text-[12px]">
			<div className="shrink-0 bg-[#2a579a] text-white">
				<TitleBar />
				<TabBar />
			</div>
			<div className="shrink-0">
				<Ribbon />
			</div>
			<QuickAccess />
			<div className="flex min-h-0 flex-1">
				<VerticalRuler />
				<div className="flex min-w-0 flex-1 flex-col">
					<HorizontalRuler />
					<Page />
				</div>
				<ScrollBar />
			</div>
			<StatusBar />
			<SiteBadge />
		</div>
	);
}
